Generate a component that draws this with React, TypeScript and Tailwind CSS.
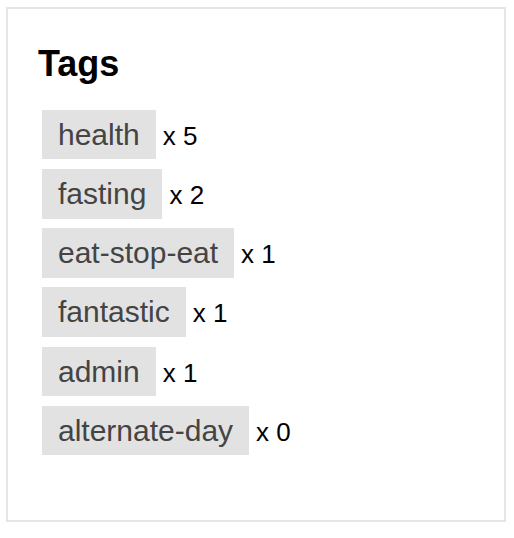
const tags = [
  { name: 'health', count: 5 },
  { name: 'fasting', count: 2 },
  { name: 'eat-stop-eat', count: 1 },
  { name: 'fantastic', count: 1 },
  { name: 'admin', count: 1 },
  { name: 'alternate-day', count: 0 },
];

export default function App() {
  return (
    <div className="min-h-screen bg-white px-[6px] pt-[7px] font-['Liberation_Sans',Arial,sans-serif]">
      <div className="h-[515px] w-[500px] border-2 border-[#e5e5e5] px-[30px] pt-[34px]">
        <h2 className="text-[36px] leading-[1.15] font-bold text-black">Tags</h2>
        <ul className="mt-[25.5px] flex flex-col gap-[9.7px] pl-[4px]">
          {tags.map((t) => (
            <li key={t.name} className="flex items-baseline">
              <span className="h-[49.5px] bg-[#e2e2e2] px-[16px] text-[30px] leading-[49.5px] text-[#444]">{t.name}</span>
              <span className="ml-[7px] text-[26px] text-black">x {t.count}</span>
            </li>
          ))}
        </ul>
      </div>
    </div>
  );
}
